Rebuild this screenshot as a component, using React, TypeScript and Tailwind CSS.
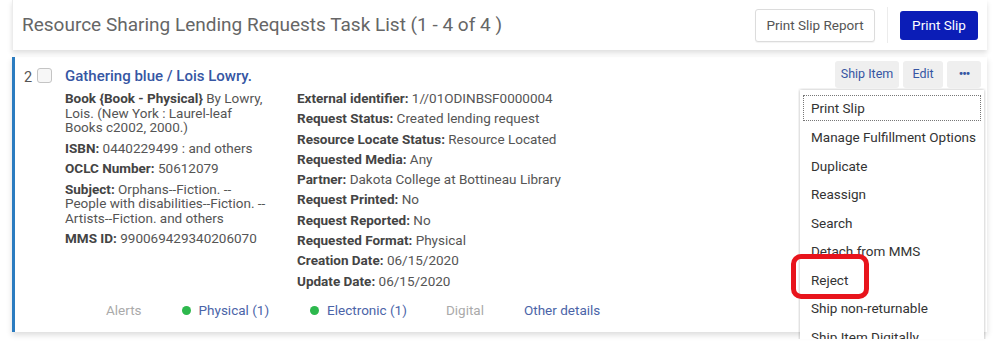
import React from "react";

function Field({ label, value }: { label: string; value: React.ReactNode }) {
  return (
    <div>
      <span className="font-bold text-[#444]">{label}:</span> {value}
    </div>
  );
}

export default function App() {
  const menu = [
    "Print Slip",
    "Manage Fulfillment Options",
    "Duplicate",
    "Reassign",
    "Search",
    "Detach from MMS",
    "Reject",
    "Ship non-returnable",
    "Ship Item Digitally",
  ];
  return (
    <div className="relative h-[351px] w-[995px] overflow-hidden bg-white font-['Roboto',sans-serif]">
      {/* Header */}
      <div className="relative z-10 ml-[12px] flex h-[50px] w-[975px] items-center border-l border-[#ececec] bg-white pl-[9px] pr-[9px] shadow-[0_3px_5px_rgba(0,0,0,0.13)]">
        <div className="flex-1 text-[19px] text-[#666]">
          Resource Sharing Lending Requests Task List (1 - 4 of 4 )
        </div>
        <button className="h-[33px] w-[120px] rounded-[3px] border border-[#dcdcdc] bg-white text-[13.5px] text-[#555] shadow-[0_1px_1px_rgba(0,0,0,0.05)]">
          Print Slip Report
        </button>
        <div className="mx-[12px] h-[36px] w-px bg-[#ececec]" />
        <button className="h-[29px] w-[78px] rounded-[3px] bg-[#0b1db7] text-[13.5px] text-white">
          Print Slip
        </button>
      </div>

      {/* Card */}
      <div className="relative ml-[12px] mt-[7px] h-[275px] w-[975px] border-l-[3px] border-[#2b7cc0] bg-white shadow-[0_3px_6px_rgba(0,0,0,0.14)]">
        <div className="flex pt-[9px]">
          <div className="w-[22px] pl-[9px] pt-[1px] text-[14.5px] text-[#555]">2</div>
          <div className="mt-[2px] h-[15px] w-[15px] rounded-[3px] border border-[#c4c4c4] bg-[#f7f7f7]" />
          <div className="ml-[13px] flex-1">
            <div className="text-[15px] font-medium leading-[20px] text-[#3656a3]">
              Gathering blue / Lois Lowry.
            </div>
            <div className="mt-[5px] flex text-[13.5px] leading-[14.5px] text-[#555]">
              <div className="mr-[29px] flex w-[203px] flex-col gap-[6px]">
                <div>
                  <span className="font-bold text-[#444]">Book {"{"}Book - Physical{"}"}</span> By Lowry, Lois. (New York : Laurel-leaf Books c2002, 2000.)
                </div>
                <Field label="ISBN" value="0440229499 : and others" />
                <Field label="OCLC Number" value="50612079" />
                <Field
                  label="Subject"
                  value={
                    <>
                      <span className="whitespace-nowrap">Orphans--Fiction. --</span>{" "}
                      People with{" "}
                      <span className="whitespace-nowrap">disabilities--Fiction. --</span>{" "}
                      <span className="whitespace-nowrap">Artists--Fiction.</span> and others
                    </>
                  }
                />
                <Field label="MMS ID" value="990069429340206070" />
              </div>
              <div className="flex flex-col gap-[5.8px]">
                <Field label="External identifier" value="1//01ODINBSF0000004" />
                <Field label="Request Status" value="Created lending request" />
                <Field label="Resource Locate Status" value="Resource Located" />
                <Field label="Requested Media" value="Any" />
                <Field label="Partner" value="Dakota College at Bottineau Library" />
                <Field label="Request Printed" value="No" />
                <Field label="Request Reported" value="No" />
                <Field label="Requested Format" value="Physical" />
                <Field label="Creation Date" value="06/15/2020" />
                <Field label="Update Date" value="06/15/2020" />
              </div>
            </div>
          </div>
        </div>

        {/* Footer tabs */}
        <div className="absolute left-[91px] top-[244px] flex items-center text-[13.5px] leading-[18px]">
          <span className="text-[#aaa]">Alerts</span>
          <span className="ml-[40px] h-[9px] w-[9px] rounded-full bg-[#2db84d]" />
          <span className="ml-[8px] text-[#4b64a8]">Physical (1)</span>
          <span className="ml-[41px] h-[9px] w-[9px] rounded-full bg-[#2db84d]" />
          <span className="ml-[8px] text-[#4b64a8]">Electronic (1)</span>
          <span className="ml-[39px] text-[#aaa]">Digital</span>
          <span className="ml-[40px] text-[#4b64a8]">Other details</span>
        </div>

        {/* Row actions */}
        <div className="absolute right-[6px] top-[4px] flex gap-[4px] text-[12.5px] text-[#3656a3]">
          <div className="flex h-[27px] w-[64px] items-center justify-center rounded-[3px] bg-[#efefef]">Ship Item</div>
          <div className="flex h-[27px] w-[40px] items-center justify-center rounded-[3px] bg-[#efefef]">Edit</div>
          <div className="flex h-[27px] w-[34px] items-center justify-center rounded-[3px] bg-[#efefef] font-bold tracking-[-1px]">•••</div>
        </div>
      </div>

      {/* Dropdown menu (clipped at the bottom of the screenshot) */}
      <div className="absolute left-[798px] top-[88px] z-20 h-[251px] w-[188px] overflow-hidden px-[2px] pt-[2px]">
        <div className="w-[184px] bg-white pt-[3px] text-[13.5px] text-[#333] shadow-[0_0_3px_rgba(0,0,0,0.3)]">
          {menu.map((m, i) => (
            <div key={m} className={i === 0 ? "flex h-[30px] items-center" : "flex h-[28.5px] items-center"}>
              {i === 0 ? (
                <div className="mx-[3px] flex h-[26px] flex-1 items-center border border-dotted border-[#777] pl-[7px]">{m}</div>
              ) : (
                <div className="pl-[11px]">{m}</div>
              )}
            </div>
          ))}
        </div>
      </div>

      {/* Red highlight */}
      <div className="absolute left-[791px] top-[254px] z-30 h-[45px] w-[78px] rounded-[10px] border-[5px] border-[#e8141c]" />
    </div>
  );
}
